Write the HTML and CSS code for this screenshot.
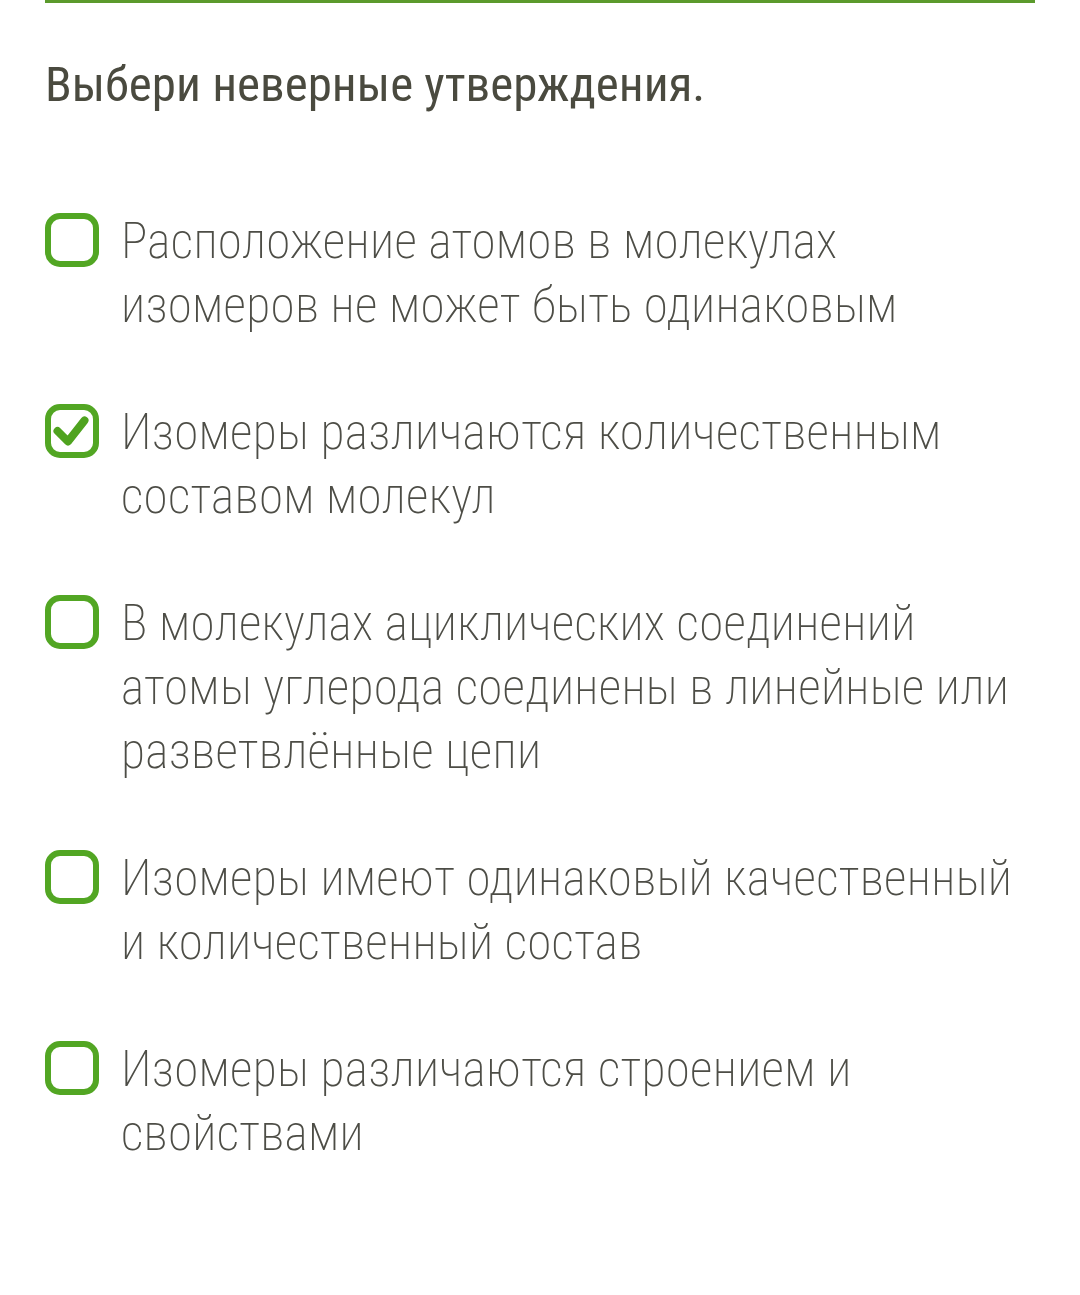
FILE: index.html
```html
<!DOCTYPE html>
<html lang="ru">
<head>
  <meta charset="UTF-8">
  <title>Выбери неверные утверждения</title>
  <link rel="stylesheet" href="styles.css">
</head>
<body>
  <div class="task">
    <div class="topline"></div>
    <h1 class="question">Выбери неверные утверждения.</h1>

    <div class="answers">
      <label class="answer">
        <span class="box"></span>
        <span class="text">Расположение атомов в молекулах изомеров не может быть одинаковым</span>
      </label>
      <label class="answer checked">
        <span class="box">
          <svg viewBox="0 0 53 53" width="53" height="53"><path d="M12.5 27 L23 37.5 L39.5 16.5" fill="none" stroke="#4fa31f" stroke-width="8" stroke-linecap="round" stroke-linejoin="round"/></svg>
        </span>
        <span class="text">Изомеры различаются количественным составом молекул</span>
      </label>
      <label class="answer">
        <span class="box"></span>
        <span class="text">В молекулах ациклических соединений атомы углерода соединены в линейные или разветвлённые цепи</span>
      </label>
      <label class="answer">
        <span class="box"></span>
        <span class="text">Изомеры имеют одинаковый качественный и количественный состав</span>
      </label>
      <label class="answer">
        <span class="box"></span>
        <span class="text">Изомеры различаются строением и свойствами</span>
      </label>
    </div>
  </div>
</body>
</html>
```

FILE: styles.css
```css
body {
  margin: 0;
  background: #ffffff;
  font-family: 'Roboto', 'Liberation Sans', sans-serif;
}

.task {
  padding: 0 45px;
}

.topline {
  height: 3px;
  background-color: #5b9a2c;
}

.question {
  margin: 50px 0 0;
  font-size: 49px;
  font-weight: 400;
  font-stretch: condensed;
  line-height: 64px;
  color: #4a4a3f;
}

.answers {
  margin-top: 92px;
  display: flex;
  flex-direction: column;
  gap: 63px;
}

.answer {
  display: flex;
  align-items: flex-start;
  gap: 22px;
  cursor: pointer;
}

.box {
  flex: none;
  width: 54px;
  height: 54px;
  margin-top: 4px;
  box-sizing: border-box;
  border: 6.5px solid #52a623;
  border-radius: 15px;
  position: relative;
}

.box svg {
  position: absolute;
  left: -6px;
  top: -6px;
}

.text {
  font-size: 49.4px;
  font-weight: 200;
  font-stretch: condensed;
  letter-spacing: 0.3px;
  line-height: 64px;
  color: #4d4d46;
}
```
